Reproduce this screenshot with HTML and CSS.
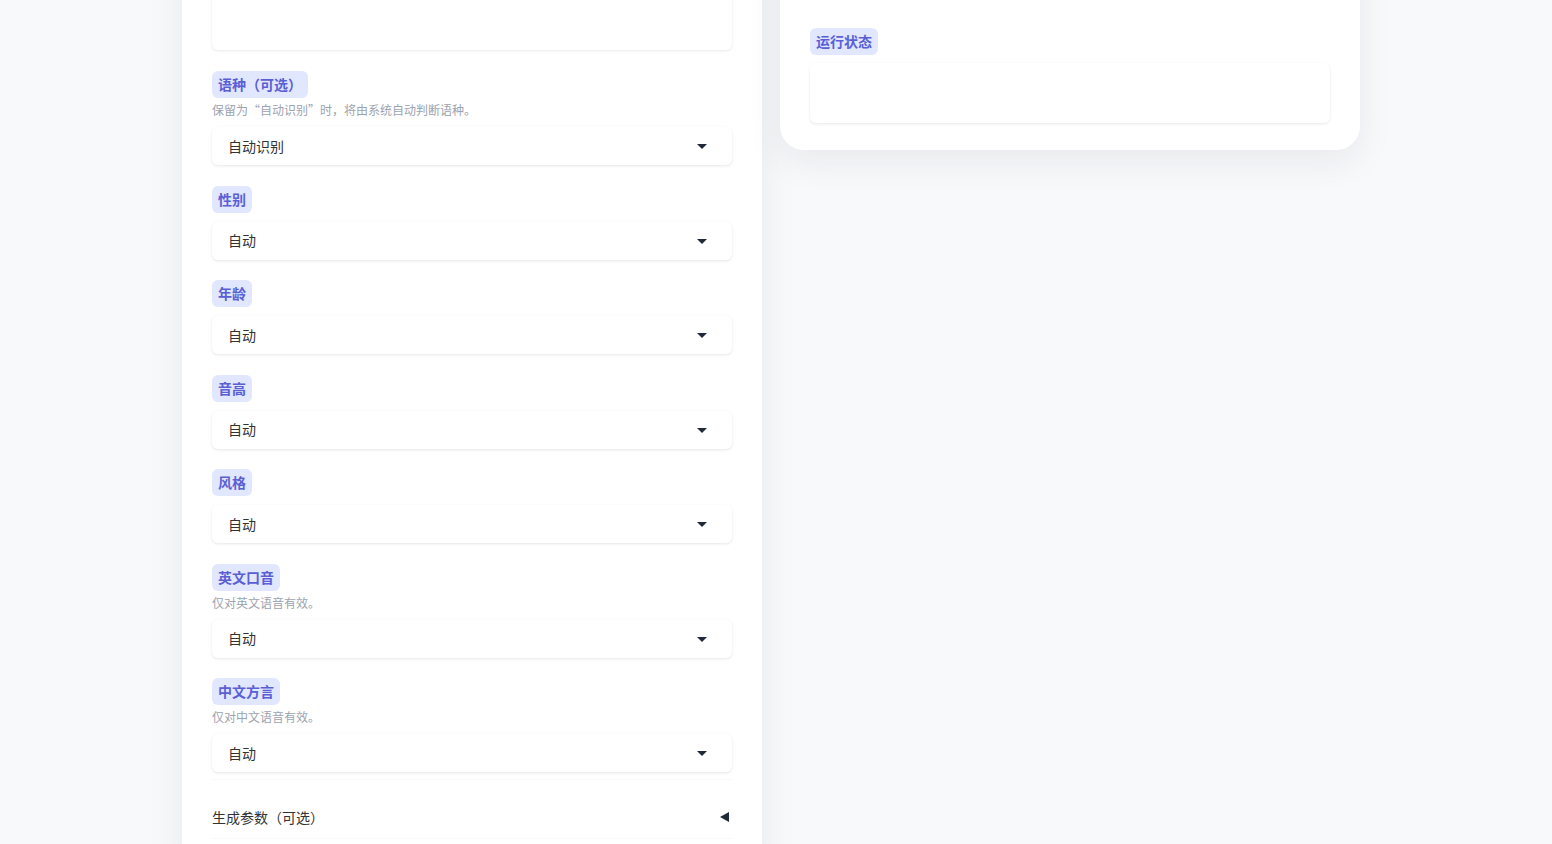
FILE: index.html
```html
<!DOCTYPE html>
<html lang="zh-CN">
<head>
    <meta charset="UTF-8">
    <meta name="viewport" content="width=device-width, initial-scale=1.0">
    <title>语音生成</title>
    <link rel="stylesheet" href="styles.css">
</head>
<body>
    <div class="layout">
        <!-- INPUT COLUMN -->
        <section class="panel panel-left">
            <div class="textbox"></div>

            <div class="form">
                <div class="field">
                    <span class="chip">语种（可选）</span>
                    <div class="help">保留为“自动识别”时，将由系统自动判断语种。</div>
                    <div class="select"><span>自动识别</span><i class="caret"></i></div>
                </div>

                <div class="field">
                    <span class="chip">性别</span>
                    <div class="select"><span>自动</span><i class="caret"></i></div>
                </div>

                <div class="field">
                    <span class="chip">年龄</span>
                    <div class="select"><span>自动</span><i class="caret"></i></div>
                </div>

                <div class="field">
                    <span class="chip">音高</span>
                    <div class="select"><span>自动</span><i class="caret"></i></div>
                </div>

                <div class="field">
                    <span class="chip">风格</span>
                    <div class="select"><span>自动</span><i class="caret"></i></div>
                </div>

                <div class="field">
                    <span class="chip">英文口音</span>
                    <div class="help">仅对英文语音有效。</div>
                    <div class="select"><span>自动</span><i class="caret"></i></div>
                </div>

                <div class="field">
                    <span class="chip">中文方言</span>
                    <div class="help">仅对中文语音有效。</div>
                    <div class="select"><span>自动</span><i class="caret"></i></div>
                </div>
            </div>

            <div class="accordion">
                <span>生成参数（可选）</span>
                <i class="arrow"></i>
            </div>
        </section>

        <!-- OUTPUT COLUMN -->
        <section class="panel panel-right">
            <div class="output-box"></div>
            <div class="field">
                <span class="chip">运行状态</span>
                <div class="status-box"></div>
            </div>
        </section>
    </div>
</body>
</html>
```

FILE: styles.css
```css
body {
    margin: 0;
    font-family: "Noto Sans CJK SC", "Noto Sans", sans-serif;
    background: #f8f9fb;
    color: #333333;
    height: 844px;
    overflow: hidden;
}
/* page is shown scrolled down a little */
.layout {
    display: flex;
    align-items: flex-start;
    gap: 18px;
    padding-left: 182px;
    margin-top: -120px;
}
.panel {
    width: 580px;
    box-sizing: border-box;
    background: #ffffff;
}
.panel-left {
    padding: 30px 30px 40px;
    box-shadow: 0 0 36px rgba(17, 24, 39, 0.07);
}
.panel-right {
    padding: 30px 30px 27px;
    border-radius: 24px;
    box-shadow: 0 12px 36px rgba(17, 24, 39, 0.07);
}
.textbox {
    height: 140px;
    background: #fff;
    border-radius: 6px;
    box-shadow: 0 1px 3px rgba(0, 0, 0, 0.09);
}
.form {
    display: flex;
    flex-direction: column;
    gap: 20.5px;
    margin-top: 21px;
    padding-bottom: 7px;
    border-bottom: 1px solid #f8f9fa;
}
.field {
    display: flex;
    flex-direction: column;
    align-items: flex-start;
}
.chip {
    display: inline-block;
    height: 27px;
    line-height: 27px;
    padding: 0 6px;
    border-radius: 6px;
    background: #e0e7ff;
    color: #5b5fd6;
    font-size: 14px;
    font-weight: 600;
}
.help {
    margin-top: 4px;
    font-size: 12px;
    line-height: 16px;
    color: #9ca3af;
}
.select {
    align-self: stretch;
    display: flex;
    align-items: center;
    justify-content: space-between;
    height: 38px;
    margin-top: 9px;
    padding: 0 25px 1px 16px;
    box-sizing: border-box;
    background: #fff;
    border-radius: 6px;
    box-shadow: 0 1px 3px rgba(0, 0, 0, 0.1);
    font-size: 14px;
    color: #333333;
}
.caret {
    width: 0;
    height: 0;
    border-left: 5px solid transparent;
    border-right: 5px solid transparent;
    border-top: 5px solid #1f2937;
    margin-top: 2px;
}
.accordion {
    display: flex;
    align-items: center;
    justify-content: space-between;
    padding: 27px 3px 11px 0;
    line-height: 20px;
    font-size: 14px;
    color: #333333;
    border-bottom: 1px solid #f8f9fa;
}
.arrow {
    width: 0;
    height: 0;
    border-top: 5px solid transparent;
    border-bottom: 5px solid transparent;
    border-right: 9px solid #1f2937;
}
.output-box {
    height: 98px;
    margin-bottom: 20px;
}
.status-box {
    align-self: stretch;
    height: 60px;
    margin-top: 8px;
    background: #fff;
    border-radius: 6px;
    box-shadow: 0 1px 3px rgba(0, 0, 0, 0.09);
}
```
